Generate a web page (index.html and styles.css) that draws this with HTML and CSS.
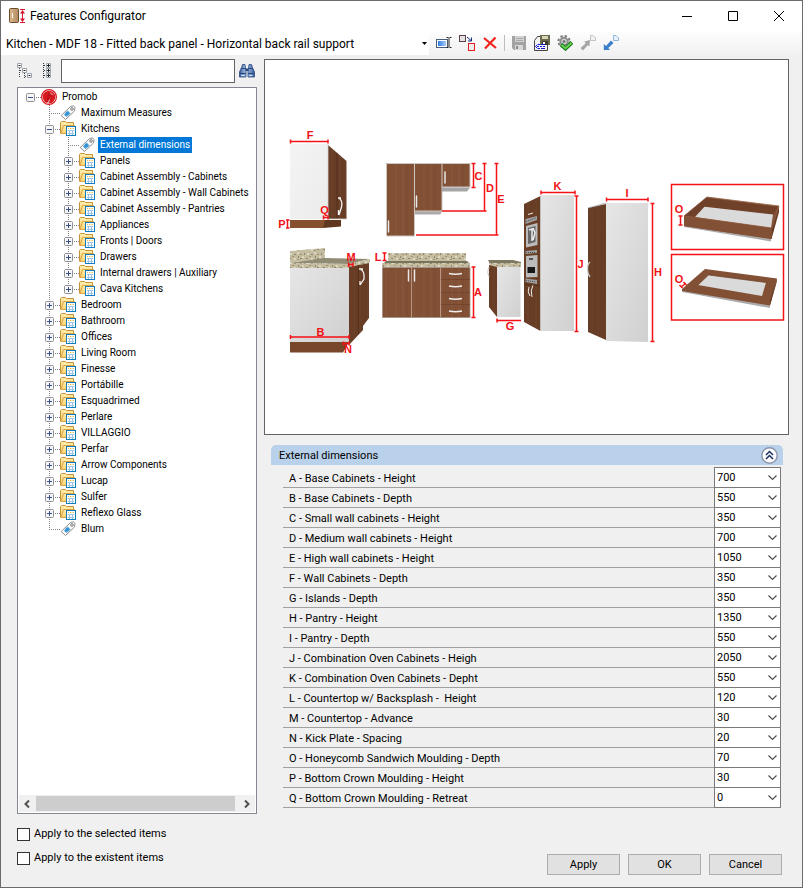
FILE: index.html
```html
<!DOCTYPE html>
<html lang="en">
<head>
<meta charset="utf-8">
<title>Features Configurator</title>
<link rel="stylesheet" href="styles.css">
</head>
<body>
<svg class="defs" aria-hidden="true">
  <defs>
    <linearGradient id="gold" x1="0" y1="0" x2="0" y2="1"><stop offset="0" stop-color="#ffeeb0"/><stop offset="1" stop-color="#fbd36c"/></linearGradient>
    <linearGradient id="door" x1="0" y1="0" x2="1" y2="0"><stop offset="0" stop-color="#dcb98c"/><stop offset="1" stop-color="#b08a62"/></linearGradient>
    <linearGradient id="bino" x1="0" y1="0" x2="1" y2="0"><stop offset="0" stop-color="#35599a"/><stop offset=".45" stop-color="#b3cbee"/><stop offset="1" stop-color="#35599a"/></linearGradient>
    <linearGradient id="sky" x1="0" y1="0" x2="1" y2="0"><stop offset="0" stop-color="#2f7fe6"/><stop offset="1" stop-color="#a9cdf8"/></linearGradient>
    <symbol id="folder" viewBox="0 0 16 16">
      <path d="M.5 12.500V1.500L1.500 .5H5.500L6.500 1.500H13.500V5" fill="url(#gold)" stroke="#c8923c"/>
      <path d="M1 12.500L3.500 4.500H14.500V12.500Z" fill="url(#gold)" stroke="#d9a141"/>
      <rect x="6.500" y="5.500" width="9" height="9" fill="#fff" stroke="#0f7cc0"/>
      <path d="M8 7.500H9M10 7.500H11.500M12.500 7.500H14" stroke="#f3c04d"/>
      <path d="M8 9.500H14M8 12.500H14M9.500 9V14M12.500 9V14" stroke="#9cc2e6"/>
    </symbol>
    <symbol id="tag" viewBox="0 0 16 16">
      <path d="M10.500 1.500L13.500 .8L15 2.500L14.500 6L5.500 14.500L1.200 10.500Z" fill="#fafafa" stroke="#8f8f8f"/>
      <path d="M7.500 5.500L10.500 8.500L6.500 12L4 9.500Z" fill="#4aa3dc"/>
      <path d="M6 7L9 10M8.800 7L5 10.500" stroke="#1b7fc6" stroke-width=".8"/>
      <circle cx="12" cy="4" r="1.300" fill="#fff" stroke="#777"/>
    </symbol>
    <symbol id="promob" viewBox="0 0 16 16">
      <circle cx="8" cy="8" r="7.400" fill="#fff" stroke="#d71920" stroke-width="1.200"/>
      <circle cx="8" cy="8" r="6.300" fill="#d71920"/>
      <path d="M7.500 4L11 3.500L12.500 6L10.500 7.500L8.500 7L7.500 9L9 10L8.500 12.500L6.500 13L6 9Z" fill="#b5121a"/>
      <path d="M8.500 3L12 4.500L12.500 6.500L10 6L9 4.500Z" fill="#ee6a6e"/>
      <path d="M8.500 10.500L7.500 13.500L5.500 14.200" fill="none" stroke="#fff" stroke-width=".8"/>
    </symbol>
    <symbol id="plus" viewBox="0 0 9 9">
      <rect x=".5" y=".5" width="8" height="8" rx="1" fill="#f6f6f6" stroke="#919191"/>
      <path d="M2 4.500H7M4.500 2V7" stroke="#33518f"/>
    </symbol>
    <symbol id="minus" viewBox="0 0 9 9">
      <rect x=".5" y=".5" width="8" height="8" rx="1" fill="#f6f6f6" stroke="#919191"/>
      <path d="M2 4.500H7" stroke="#33518f"/>
    </symbol>
    <symbol id="chevron" viewBox="0 0 9 6"><path d="M.5 .5L4.500 4.500L8.500 .5" fill="none" stroke="#505050" stroke-width="1.200"/></symbol>
  </defs>
</svg>

<div class="window">
  <header class="titlebar">
    <svg class="app-icon" viewBox="0 0 17 16" aria-hidden="true">
      <rect x=".5" y=".5" width="9" height="14" rx="1" fill="url(#door)" stroke="#6b4d2e"/>
      <path d="M3.500 5V10" stroke="#fff"/>
      <path d="M11 1.500H16M11 14.500H16M13.500 3V13" stroke="#d2122e"/>
      <path d="M13.500 2L16 5.500H11ZM13.500 14L16 10.500H11Z" fill="#d2122e"/>
    </svg>
    <h1>Features Configurator</h1>
    <button class="caption" aria-label="Minimize"><svg viewBox="0 0 10 10"><path d="M0 5.500H10"/></svg></button>
    <button class="caption" aria-label="Maximize"><svg viewBox="0 0 10 10"><path d="M.5 .5H9.500V9.500H.5Z"/></svg></button>
    <button class="caption" aria-label="Close"><svg viewBox="0 0 10 10"><path d="M0 0L10 10M10 0L0 10"/></svg></button>
  </header>

  <div class="toolbar">
    <div class="profile">
      <select aria-label="Profile"><option>Kitchen - MDF 18 - Fitted back panel - Horizontal back rail support</option></select>
      <svg viewBox="0 0 5 3" aria-hidden="true"><path d="M0 0H5L2.500 3Z"/></svg>
    </div>
    <button aria-label="Rename"><svg viewBox="0 0 16 16">
      <rect x=".5" y="4.500" width="11" height="8" fill="#fff" stroke="#4b5d7c"/><rect x="2" y="6" width="8" height="5" fill="url(#sky)"/>
      <path d="M10.500 2.500H12.500M13.500 2.500H15.500M13 3V12M10.500 12.500H12.500M13.500 12.500H15.500" stroke="#222" fill="none"/>
    </svg></button>
    <button aria-label="Replace"><svg viewBox="0 0 16 16">
      <rect x=".5" y=".5" width="6" height="6" fill="#e3e3e6" stroke="#5c4048"/><rect x="9.500" y="8.500" width="6" height="7" fill="#ececf0" stroke="#e01b1b"/>
      <path d="M8 2L12 5.500M12.500 2.500V6H9" stroke="#102a78" fill="none"/>
    </svg></button>
    <button aria-label="Delete"><svg viewBox="0 0 16 16"><path d="M2 3L14 13M13.500 2.500L3 13.500" stroke="#f0241c" stroke-width="2.200" fill="none"/></svg></button>
    <span class="separator"></span>
    <button aria-label="Save"><svg viewBox="0 0 16 16">
      <path d="M1 1H15V15H3L1 13Z" fill="#a2a2a2"/><rect x="4" y="1" width="9" height="6" fill="#d2d2d2"/><path d="M5 3.500H12M5 5.500H12" stroke="#a8a8a8"/><rect x="4" y="10" width="8" height="5" fill="#d8d8d8"/><rect x="5" y="11" width="2" height="3" fill="#8a8a8a"/>
    </svg></button>
    <button aria-label="Save as"><svg viewBox="0 0 16 16">
      <path d="M.5 5.500L3.500 1.500H13.500V15.500H.5Z" fill="#f2f2f2" stroke="#444"/>
      <path d="M6 0H16V10H6Z" fill="#6c6b52"/><rect x="8" y="1" width="6" height="3" fill="#d6d4b4"/><rect x="8" y="6" width="6" height="4" fill="#3c3b2c"/><rect x="9" y="7" width="2" height="2" fill="#fff"/>
      <path d="M3.500 9.500L1.500 11.500L3.500 13.500M4 9.500H6M7 9.500H11M3 11.500H5M6 11.500H8M9 11.500H11M4 13.500H6M7 13.500H11" stroke="#1217d8" fill="none"/>
    </svg></button>
    <button aria-label="Validate"><svg viewBox="0 0 16 16">
      <circle cx="7" cy="6.500" r="5.600" fill="none" stroke="#808080" stroke-width="2" stroke-dasharray="2.400 2"/>
      <circle cx="7" cy="6.500" r="3.700" fill="#d5d5d5" stroke="#8d8d8d" stroke-width="2"/><circle cx="7" cy="6.500" r="1.500" fill="#777"/>
      <path d="M4 9.500L8.500 13.500L15 7.500" fill="none" stroke="#1d7d22" stroke-width="4"/><path d="M4.500 10L8.500 13.300L14.500 8" fill="none" stroke="#65cf4e" stroke-width="2"/>
    </svg></button>
    <button aria-label="Export"><svg viewBox="0 0 16 16">
      <path d="M.5 13L5.500 8.500L4.500 6.500L10 5L9.500 11L7.500 10.500L3 15.500Z" fill="#a6a6a6"/><path d="M10.500 .5H13L15.500 3V5.500H10.500Z" fill="#f2f2f2" stroke="#c2c2c2"/>
    </svg></button>
    <button aria-label="Import"><svg viewBox="0 0 16 16">
      <path d="M.8 9V15H7L5.300 13L10.500 8L8 5.500L3 11Z" fill="#3b7fcb"/><path d="M10.500 .5H13L15.500 3V5.500H10.500Z" fill="#e9f2fc" stroke="#91b4da"/>
    </svg></button>
  </div>

  <main class="content">
    <section class="browser">
      <div class="search">
        <button aria-label="Collapse all"><svg viewBox="0 0 16 16">
          <path d="M2.500 5V15M7.500 10V15M3 7.500H5M8 13.500H10" stroke="#444" stroke-dasharray="1 1" fill="none"/>
          <path d="M.5 .5H4.500V4.500H.5ZM5.500 5.500H9.500V9.500H5.500ZM10.500 10.500H14.500V14.500H10.500Z" fill="#fff" stroke="#9ba3ad"/><path d="M1.500 2.500H3.500M6.500 7.500H8.500M11.500 12.500H13.500" stroke="#222"/>
        </svg></button>
        <button aria-label="Expand all"><svg viewBox="0 0 16 16">
          <path d="M4.500 0V16M5 2.500H7M5 7.500H7M5 12.500H7" stroke="#333" stroke-dasharray="1 1" fill="none"/>
          <path d="M7.500 .5H11.500V4.500H7.500ZM7.500 5.500H11.500V9.500H7.500ZM7.500 10.500H11.500V14.500H7.500Z" fill="#fff" stroke="#9ba3ad"/><path d="M8 2.500H11M9.500 1V4M8 7.500H11M9.500 6V9M8 12.500H11M9.500 11V14" stroke="#222"/>
        </svg></button>
        <input type="text" aria-label="Search">
        <button aria-label="Find"><svg viewBox="0 0 16 16">
          <path d="M3.500 1.500H6L6.500 5L7 8V14H.5V9L2.500 4.500ZM10 1.500H12.500L13.500 4.500L15.500 9V14H9V8L9.500 5Z" fill="url(#bino)" stroke="#27487f" stroke-width=".8"/><path d="M6.500 5.500H9.500V8H6.500Z" fill="#27487f"/><path d="M2 5.500H6.500M9.500 5.500H14M1 10.500H7M9 10.500H15" stroke="#27487f"/><path d="M2 12.500H5M10.500 12.500H13.500" stroke="#d5e3f8"/>
        </svg></button>
      </div>
      <div class="tree">
        <ul class="root">
          <li><div class="node"><span class="twist"><svg><use href="#minus"/></svg></span><svg class="pic"><use href="#promob"/></svg><span class="name">Promob</span></div>
            <ul>
              <li><div class="node"><span class="twist leaf"></span><svg class="pic"><use href="#tag"/></svg><span class="name">Maximum Measures</span></div></li>
              <li><div class="node"><span class="twist"><svg><use href="#minus"/></svg></span><svg class="pic"><use href="#folder"/></svg><span class="name">Kitchens</span></div>
                <ul>
                  <li><div class="node"><span class="twist leaf"></span><svg class="pic"><use href="#tag"/></svg><span class="name selected">External dimensions</span></div></li>
                  <li><div class="node"><span class="twist"><svg><use href="#plus"/></svg></span><svg class="pic"><use href="#folder"/></svg><span class="name">Panels</span></div></li>
                  <li><div class="node"><span class="twist"><svg><use href="#plus"/></svg></span><svg class="pic"><use href="#folder"/></svg><span class="name">Cabinet Assembly - Cabinets</span></div></li>
                  <li><div class="node"><span class="twist"><svg><use href="#plus"/></svg></span><svg class="pic"><use href="#folder"/></svg><span class="name">Cabinet Assembly - Wall Cabinets</span></div></li>
                  <li><div class="node"><span class="twist"><svg><use href="#plus"/></svg></span><svg class="pic"><use href="#folder"/></svg><span class="name">Cabinet Assembly - Pantries</span></div></li>
                  <li><div class="node"><span class="twist"><svg><use href="#plus"/></svg></span><svg class="pic"><use href="#folder"/></svg><span class="name">Appliances</span></div></li>
                  <li><div class="node"><span class="twist"><svg><use href="#plus"/></svg></span><svg class="pic"><use href="#folder"/></svg><span class="name">Fronts | Doors</span></div></li>
                  <li><div class="node"><span class="twist"><svg><use href="#plus"/></svg></span><svg class="pic"><use href="#folder"/></svg><span class="name">Drawers</span></div></li>
                  <li><div class="node"><span class="twist"><svg><use href="#plus"/></svg></span><svg class="pic"><use href="#folder"/></svg><span class="name">Internal drawers | Auxiliary</span></div></li>
                  <li><div class="node"><span class="twist"><svg><use href="#plus"/></svg></span><svg class="pic"><use href="#folder"/></svg><span class="name">Cava Kitchens</span></div></li>
                </ul>
              </li>
              <li><div class="node"><span class="twist"><svg><use href="#plus"/></svg></span><svg class="pic"><use href="#folder"/></svg><span class="name">Bedroom</span></div></li>
              <li><div class="node"><span class="twist"><svg><use href="#plus"/></svg></span><svg class="pic"><use href="#folder"/></svg><span class="name">Bathroom</span></div></li>
              <li><div class="node"><span class="twist"><svg><use href="#plus"/></svg></span><svg class="pic"><use href="#folder"/></svg><span class="name">Offices</span></div></li>
              <li><div class="node"><span class="twist"><svg><use href="#plus"/></svg></span><svg class="pic"><use href="#folder"/></svg><span class="name">Living Room</span></div></li>
              <li><div class="node"><span class="twist"><svg><use href="#plus"/></svg></span><svg class="pic"><use href="#folder"/></svg><span class="name">Finesse</span></div></li>
              <li><div class="node"><span class="twist"><svg><use href="#plus"/></svg></span><svg class="pic"><use href="#folder"/></svg><span class="name">Portábille</span></div></li>
              <li><div class="node"><span class="twist"><svg><use href="#plus"/></svg></span><svg class="pic"><use href="#folder"/></svg><span class="name">Esquadrimed</span></div></li>
              <li><div class="node"><span class="twist"><svg><use href="#plus"/></svg></span><svg class="pic"><use href="#folder"/></svg><span class="name">Perlare</span></div></li>
              <li><div class="node"><span class="twist"><svg><use href="#plus"/></svg></span><svg class="pic"><use href="#folder"/></svg><span class="name">VILLAGGIO</span></div></li>
              <li><div class="node"><span class="twist"><svg><use href="#plus"/></svg></span><svg class="pic"><use href="#folder"/></svg><span class="name">Perfar</span></div></li>
              <li><div class="node"><span class="twist"><svg><use href="#plus"/></svg></span><svg class="pic"><use href="#folder"/></svg><span class="name">Arrow Components</span></div></li>
              <li><div class="node"><span class="twist"><svg><use href="#plus"/></svg></span><svg class="pic"><use href="#folder"/></svg><span class="name">Lucap</span></div></li>
              <li><div class="node"><span class="twist"><svg><use href="#plus"/></svg></span><svg class="pic"><use href="#folder"/></svg><span class="name">Sulfer</span></div></li>
              <li><div class="node"><span class="twist"><svg><use href="#plus"/></svg></span><svg class="pic"><use href="#folder"/></svg><span class="name">Reflexo Glass</span></div></li>
              <li><div class="node"><span class="twist leaf"></span><svg class="pic"><use href="#tag"/></svg><span class="name">Blum</span></div></li>
            </ul>
          </li>
        </ul>
        <div class="scrollbar" aria-hidden="true">
          <svg viewBox="0 0 8 8"><path d="M5.500 .5L2 4L5.500 7.500"/></svg>
          <span class="thumb"></span>
          <svg viewBox="0 0 8 8"><path d="M2.500 .5L6 4L2.500 7.500"/></svg>
        </div>
      </div>
    </section>

    <section class="detail">
      <div class="preview">
        <svg viewBox="265 60 523 374" role="img" aria-label="Cabinet dimension diagram">
          <defs>
            <linearGradient id="panel" x1="0" y1="0" x2="1" y2="1"><stop offset="0" stop-color="#e6e6e6"/><stop offset="1" stop-color="#d0d0d0"/></linearGradient>
            <linearGradient id="light" x1="0" y1="0" x2="1" y2="1"><stop offset="0" stop-color="#f4f4f4"/><stop offset="1" stop-color="#ebebeb"/></linearGradient>
            <pattern id="wood" width="28" height="60" patternUnits="userSpaceOnUse"><rect width="28" height="60" fill="#825035"/><path d="M4 0V60M11 0V60M22 0V60" stroke="#865439" stroke-width="2"/><path d="M15 0V60" stroke="#7b4a30"/></pattern>
            <pattern id="dark" width="14" height="40" patternUnits="userSpaceOnUse"><rect width="14" height="40" fill="#673d25"/><path d="M4 0V40M10 0V40" stroke="#6b4028" stroke-width="1.500"/></pattern>
            <pattern id="granite" width="17" height="9" patternUnits="userSpaceOnUse">
              <rect width="17" height="9" fill="#c3bca1"/>
              <path d="M1 1H3V3H1ZM8 0H10V2H8ZM13 4H15V6H13ZM5 6H7V8H5Z" fill="#dcd7c1"/>
              <path d="M5 2H7V3H5ZM11 6H13V7H11ZM0 6H2V7H0ZM15 1H16V3H15ZM9 4H10V6H9Z" fill="#8f886f"/>
              <path d="M3 4H5V5H3ZM11 2H13V3H11ZM8 7H10V8H8Z" fill="#a98f6b"/>
            </pattern>
            <path id="pull" d="M0 0V11" stroke="#e8e8e8" stroke-width="1.500" stroke-linecap="round"/>
          </defs>

          <g class="wall-side">
            <path d="M290 144H328V219H290Z" fill="url(#light)"/>
            <path d="M328 145L346.500 161V219L328 219Z" fill="url(#dark)"/>
            <path d="M337 153V219" stroke="#4d2a17" stroke-width=".7"/>
            <path d="M328 144V219H346" fill="none" stroke="#d8d0ca" stroke-width=".8"/>
            <path d="M290 220H328L323 228H290Z" fill="#87502f"/>
            <path d="M325 220H341V226.500L323 228Z" fill="#60381f"/>
            <path d="M338.500 198Q343 200 341.500 207L339 215M338.500 215V210M338 198H341" fill="none" stroke="#f5f5f5" stroke-width="1.300"/>
          </g>
          <g class="base-side">
            <path d="M290 251L325 248V259L290 263Z" fill="url(#granite)"/>
            <path d="M290 263L325 258L370 259L349 264Z" fill="#8f8b74"/>
            <path d="M290 263L349 264L370 259V262.500L349 268H290Z" fill="url(#granite)"/>
            <path d="M290 268H349V342H290Z" fill="url(#panel)"/>
            <path d="M349 267L369 263V318L363 326V330L349 345Z" fill="url(#dark)"/>
            <path d="M358.500 265V334" stroke="#4d2a17" stroke-width=".7"/>
            <path d="M290 342H349L343 352.500H290Z" fill="#78462a"/>
            <path d="M360 269Q365 271 364 279L360 285M360 285V281M359 269H363" fill="none" stroke="#f5f5f5" stroke-width="1.300"/>
          </g>
          <g class="wall-front">
            <path d="M386 163H415V236H386ZM415 163H442V211.500H415ZM442 163H470V187H442Z" fill="url(#wood)"/>
            <path d="M386.500 236V163.500H470V187H442V163M414.500 163V236H387M415 211H442V187" fill="none" stroke="#cbc6c2"/>
            <path d="M442 187.500H470L467 191.500H442Z" fill="#a5a5a5"/><path d="M415 212H442L440 214.500H415Z" fill="#aaa"/>
            <use href="#pull" x="388.500" y="221"/><use href="#pull" x="416.500" y="196"/><use href="#pull" x="445" y="172"/>
          </g>
          <g class="base-front">
            <path d="M388 253H466V263H388Z" fill="url(#granite)"/><path d="M386 261H467L470 264H383Z" fill="#77745e"/><path d="M382 263H470V267H382Z" fill="url(#granite)"/>
            <path d="M382.500 267.500H470V317.500H382.500Z" fill="url(#wood)" stroke="#a08f84" stroke-width=".8"/>
            <path d="M411.500 268V317M440.500 268V317" stroke="#c5aa99" stroke-width=".8"/><path d="M441 279.500H470M441 292.500H470M441 304.500H470" stroke="#6d412b" stroke-width=".7"/>
            <use href="#pull" x="408.500" y="270"/><use href="#pull" x="414.500" y="270"/>
            <path d="M449 273.500Q455.500 275 462 273.500M449 286Q455.500 287.500 462 286M449 298.500Q455.500 300 462 298.500M449 311Q455.500 312.500 462 311" fill="none" stroke="#eee" stroke-width="1.500"/>
          </g>
          <g class="island">
            <path d="M488 260H513L521 262V264L490 264Z" fill="#7d7962"/><path d="M489 263H521V267H491Z" fill="url(#granite)"/>
            <path d="M489 265L497 267V317L489 307Z" fill="url(#dark)"/><path d="M497 267H520.500V317H497Z" fill="url(#panel)"/><path d="M489 267Q486.500 272 489 277" fill="none" stroke="#ccc"/>
          </g>
          <g class="oven-tower">
            <path d="M524 204L540.500 196V331L524 322Z" fill="url(#dark)"/><path d="M540.500 195H574V331H540.500Z" fill="url(#panel)"/><path d="M540.500 196V331" stroke="#bbb" stroke-width=".6"/>
            <path d="M525.500 219L537 216V220L525.500 224ZM525.500 251L537 250V253L525.500 254ZM525.500 278.500L537 280V284L525.500 282Z" fill="#a0a0a0"/>
            <path d="M526 221.500L536 218M526 252.500H536M526 280.500L536 282" stroke="#444" stroke-dasharray="1 1"/>
            <path d="M526 226L537.500 223V245L526 247.500Z" fill="#bcbcbc"/><path d="M528 228L535.500 226V242L528 244Z" fill="#666"/><path d="M529 230L532 229V241M533 228L535 233L533 240" stroke="#eee" stroke-width="1.500" fill="none"/>
            <path d="M526 256L537.500 255V277L526 277.500Z" fill="#bcbcbc"/><path d="M527.500 267H535V273H527.500Z" fill="#171717"/><path d="M529 259H533" stroke="#333" stroke-width="1.500"/>
            <path d="M528 214.500L533 213M529 287Q527 292 530 296M533 285Q530 291 532 297" fill="none" stroke="#eee"/><path d="M524 284L540 286" stroke="#46270f" stroke-width=".6"/>
          </g>
          <g class="pantry">
            <path d="M588 208L606 204V340L588 332Z" fill="url(#dark)"/><path d="M606 203H648V342L606 341Z" fill="url(#panel)"/><path d="M588 208L606 203" stroke="#999" stroke-width=".7"/>
            <path d="M590 262Q587.500 264 587.500 269T590 277" fill="none" stroke="#ccc" stroke-width="1.300"/>
          </g>
          <g class="drawers">
            <path d="M684 225L771 239V241.500L684 227Z" fill="#aaa"/>
            <path d="M684 216L707 197L779 206L771 239L684 226Z" fill="#825035"/>
            <path d="M707 198L778 207L773 215L698 206Z" fill="#6f4129"/>
            <path d="M695 217L698 206L773 214.500L771 228Z" fill="#dadada"/>
            <path d="M684 216L707 197V204L695 217Z" fill="#70412a"/>
            <path d="M684 216L772 228V239L684 226Z" fill="#825035"/>
            <path d="M772 228L779 206V212L771.500 239Z" fill="#65391f"/>
            <path d="M684 216L707 197L779 206L772 228Z" fill="none" stroke="#915d41" stroke-width=".8"/>
            <path d="M682 290L770 304V308L682 292Z" fill="#aaa"/>
            <path d="M682 289L705 269L777 278.500L770 305.500L682 291Z" fill="#825035"/><path d="M770 301L777 278.500V281L770 305.500Z" fill="#63371f"/>
            <path d="M698 285L708.500 275L766 282.500L762 296Z" fill="#dadada"/><path d="M698 285L708.500 275L766 282.500" fill="none" stroke="#6b402a" stroke-width=".7"/>
          </g>
          <g class="dimensions">
            <path d="M290 141.500H328M290.500 139.500V143.500M328 139.500V143.500M323.500 217.500H328M323.500 215.500V219.500M328 215.500V219.500M287.500 220V228M286 220H289.500M286 228H289.500"/>
            <path d="M473.500 163.500V187M471.500 163.500H475.500M471.500 187.500H475.500M484.500 163.500V211M482.500 163.500H486.500M442 211H486.500M496.500 163.500V235M494.500 163.500H498.500M416 235H498.500"/>
            <path d="M384.500 253V260.500M382.500 253H386.500M382.500 260.500H386.500M473.500 267V317M471.500 267H475.500M471.500 317.500H475.500"/>
            <path d="M348.500 264.500H353M348.500 262.500V267M353 262.500V267M290 337H349M290.500 335V339M349 335V339M343.500 343.500H349M343.500 341.500V345.500M349 341.500V345.500"/>
            <path d="M497 320.500H521M497 318.500V322.500M541 192.500H575M541 190.500V194.500M575 190.500V194.500M576.500 196V331M574.500 196H578.500M574.500 331.500H578.500"/>
            <path d="M606 199.500H648M606.500 197.500V201.500M648 197.500V201.500M652.500 203V341M650.500 203.500H654.500M650.500 341.500H654.500"/>
            <path d="M680.500 216V225M678.500 216H682.500M678.500 225H682.500M681 287L685 284M679.500 285L682.500 288M683.500 282L686.500 285"/>
            <path d="M671.500 184.500H783.500V249.500H671.500ZM671.500 254.500H783.500V320H671.500Z"/>
          </g>
          <g class="letters">
            <text x="310" y="139">F</text><text x="324.500" y="214">Q</text><text x="282" y="228">P</text><text x="478.500" y="180">C</text><text x="490" y="192">D</text><text x="501" y="203">E</text>
            <text x="378" y="261">L</text><text x="478" y="296">A</text><text x="351" y="261">M</text><text x="320.500" y="336">B</text><text x="348" y="353">N</text><text x="510" y="330">G</text>
            <text x="557.500" y="190">K</text><text x="580.500" y="268">J</text><text x="627" y="197">I</text><text x="658" y="276">H</text><text x="679" y="213">O</text><text x="679" y="283">O</text>
          </g>
        </svg>
      </div>

      <form class="group">
        <div class="group-head"><h2>External dimensions</h2>
          <button type="button" aria-label="Collapse"><svg viewBox="0 0 19 19"><circle cx="9.500" cy="9.500" r="7.700" fill="#fbfbfd" stroke="#8c96aa" stroke-width="1.400"/><path d="M6 9L9.500 5.500L13 9M6 13L9.500 9.500L13 13" fill="none" stroke="#1f2f63" stroke-width="1.500"/></svg></button>
        </div>
        <div class="field"><label for="fa">A - Base Cabinets - Height</label><div class="combo"><select id="fa"><option>700</option></select><svg><use href="#chevron"/></svg></div></div>
        <div class="field"><label for="fb">B - Base Cabinets - Depth</label><div class="combo"><select id="fb"><option>550</option></select><svg><use href="#chevron"/></svg></div></div>
        <div class="field"><label for="fc">C - Small wall cabinets - Height</label><div class="combo"><select id="fc"><option>350</option></select><svg><use href="#chevron"/></svg></div></div>
        <div class="field"><label for="fd">D - Medium wall cabinets - Height</label><div class="combo"><select id="fd"><option>700</option></select><svg><use href="#chevron"/></svg></div></div>
        <div class="field"><label for="fe">E - High wall cabinets - Height</label><div class="combo"><select id="fe"><option>1050</option></select><svg><use href="#chevron"/></svg></div></div>
        <div class="field"><label for="ff">F - Wall Cabinets - Depth</label><div class="combo"><select id="ff"><option>350</option></select><svg><use href="#chevron"/></svg></div></div>
        <div class="field"><label for="fg">G - Islands - Depth</label><div class="combo"><select id="fg"><option>350</option></select><svg><use href="#chevron"/></svg></div></div>
        <div class="field"><label for="fh">H - Pantry - Height</label><div class="combo"><select id="fh"><option>1350</option></select><svg><use href="#chevron"/></svg></div></div>
        <div class="field"><label for="fi">I - Pantry - Depth</label><div class="combo"><select id="fi"><option>550</option></select><svg><use href="#chevron"/></svg></div></div>
        <div class="field"><label for="fj">J - Combination Oven Cabinets - Heigh</label><div class="combo"><select id="fj"><option>2050</option></select><svg><use href="#chevron"/></svg></div></div>
        <div class="field"><label for="fk">K - Combination Oven Cabinets - Depht</label><div class="combo"><select id="fk"><option>550</option></select><svg><use href="#chevron"/></svg></div></div>
        <div class="field"><label for="fl">L - Countertop w/ Backsplash -&nbsp; Height</label><div class="combo"><select id="fl"><option>120</option></select><svg><use href="#chevron"/></svg></div></div>
        <div class="field"><label for="fm">M - Countertop - Advance</label><div class="combo"><select id="fm"><option>30</option></select><svg><use href="#chevron"/></svg></div></div>
        <div class="field"><label for="fn">N - Kick Plate - Spacing</label><div class="combo"><select id="fn"><option>20</option></select><svg><use href="#chevron"/></svg></div></div>
        <div class="field"><label for="fo">O - Honeycomb Sandwich Moulding - Depth</label><div class="combo"><select id="fo"><option>70</option></select><svg><use href="#chevron"/></svg></div></div>
        <div class="field"><label for="fp">P - Bottom Crown Moulding - Height</label><div class="combo"><select id="fp"><option>30</option></select><svg><use href="#chevron"/></svg></div></div>
        <div class="field"><label for="fq">Q - Bottom Crown Moulding - Retreat</label><div class="combo"><select id="fq"><option>0</option></select><svg><use href="#chevron"/></svg></div></div>
      </form>
    </section>
  </main>

  <footer class="footer">
    <div class="scope">
      <label><input type="checkbox">Apply to the selected items</label>
      <label><input type="checkbox">Apply to the existent items</label>
    </div>
    <div class="actions">
      <button>Apply</button>
      <button>OK</button>
      <button>Cancel</button>
    </div>
  </footer>
</div>
</body>
</html>
```

FILE: styles.css
```css
* { box-sizing: border-box; }

body {
  margin: 0;
  background: #f0f0f0;
  color: #000;
  font: 11px/16px Roboto, "Liberation Sans", sans-serif;
}

button, input, select { font: inherit; color: inherit; }
button { padding: 0; border: 0; background: none; }
svg { display: block; }
.defs { position: absolute; width: 0; height: 0; }

.window {
  display: flex;
  flex-direction: column;
  min-height: 100vh;
  border: 1px solid #6b6b6b;
}

/* Title bar */
.titlebar {
  display: flex;
  align-items: center;
  height: 30px;
  padding-left: 8px;
  background: #fff;
}
.app-icon { width: 17px; height: 16px; }
.titlebar h1 {
  flex: 1;
  margin: 0 0 0 4px;
  font-size: 12px;
  font-weight: normal;
}
.caption { width: 46px; height: 30px; }
.caption svg { width: 10px; height: 10px; margin: 0 auto; overflow: visible; fill: none; stroke: #000; }

/* Toolbar */
.toolbar {
  display: flex;
  align-items: center;
  gap: 7px;
  height: 24px;
  background: linear-gradient(#fdfdfd, #f1f1f1);
}
.toolbar button, .toolbar button svg { width: 16px; height: 16px; }
.separator { width: 1px; height: 16px; margin: 0 -1px; background: #bdbdbd; }
.profile {
  position: relative;
  width: 428px;
  height: 24px;
  background: #fff;
}
.profile select {
  width: 100%;
  height: 24px;
  padding: 1px 16px 0 5px;
  border: 0;
  appearance: none;
  background: none;
  font-size: 12px;
}
.profile svg { position: absolute; right: 2px; top: 11px; width: 5px; height: 3px; pointer-events: none; }

/* Main area */
.content {
  display: grid;
  flex: 1;
  grid-template-columns: 240px minmax(0, 1fr);
  gap: 7px;
  padding: 4px 13px 0 16px;
}
.browser { display: flex; flex-direction: column; gap: 4px; }
.search { display: flex; align-items: center; gap: 4px; height: 24px; padding-right: 2px; }
.search button { flex: none; width: 16px; }
.search button svg { width: 16px; height: 16px; }
.search button + button { margin-left: 2px; }
.search input { flex: 1; min-width: 0; height: 24px; margin: 0 0 0 2px; padding: 0 4px; border: 1px solid #646464; background: #fff; }

/* Tree */
.tree {
  display: flex;
  flex: 1;
  flex-direction: column;
  justify-content: space-between;
  padding: 1px;
  border: 1px solid #828790;
  background: #fff;
  font-size: 10px;
}
.tree ul { margin: 0; padding: 0 0 0 19px; list-style: none; }
.tree .root { padding: 0 0 0 2px; overflow: hidden; }
.tree li li { background: repeating-linear-gradient(#808080 0 1px, transparent 1px 2px) 9px 0 / 1px 100% no-repeat; }
.tree li li:last-child { background-size: 1px 9px; }
.node { display: flex; align-items: center; height: 16px; white-space: nowrap; }
.twist {
  flex: none;
  width: 20px;
  padding: 4px 0 3px 5px;
  background: repeating-linear-gradient(90deg, #808080 0 1px, transparent 1px 2px) 9px 8px / 11px 1px no-repeat;
}
.twist svg { width: 9px; height: 9px; }
.twist.leaf { height: 16px; }
.pic { flex: none; width: 16px; height: 16px; }
.name { margin-left: 3px; padding: 0 2px; }
.selected { background: #0078d7; color: #fff; }

.scrollbar { display: flex; align-items: center; height: 17px; background: #f0f0f0; }
.scrollbar svg { width: 17px; height: 8px; fill: none; stroke: #505050; stroke-width: 2; }
.thumb { flex: 1; height: 15px; margin-right: 3px; background: #cdcdcd; }

/* Preview */
.preview { border: 1px solid #646464; background: #fff; }
.preview svg { width: 100%; height: auto; }
.dimensions { fill: none; stroke: #f51216; stroke-width: 1.5px; }
.letters { fill: #f01216; font: bold 11px "Liberation Sans", Arial, sans-serif; text-anchor: middle; }

/* Property group */
.group { margin: 10px 6px 0 7px; }
.group-head {
  display: flex;
  align-items: center;
  height: 20px;
  margin-bottom: 2px;
  padding: 0 4px 0 8px;
  border-radius: 5px 5px 0 0;
  background: #b9d1ea;
}
.group-head h2 { flex: 1; margin: 0; padding-top: 2px; font-size: 11px; font-weight: normal; }
.group-head button svg { width: 19px; height: 19px; }
.field { display: flex; height: 20px; margin: 0 2px 0 12px; }
.field label {
  flex: 1;
  height: 21px;
  padding: 4px 0 0 6px;
  border-bottom: 1px solid #a0a0a0;
}
.combo { position: relative; width: 67px; height: 21px; }
.combo select {
  width: 100%;
  height: 21px;
  padding: 1px 16px 0 2px;
  border: 1px solid #7a7a7a;
  border-radius: 0;
  appearance: none;
  background: #fff;
}
.combo svg { position: absolute; right: 4px; top: 8px; width: 9px; height: 6px; pointer-events: none; }

/* Footer */
.footer {
  display: flex;
  align-items: flex-end;
  justify-content: space-between;
  padding: 11px 20px 12px 16px;
}
.scope { display: flex; flex-direction: column; gap: 6px; margin-bottom: 8px; }
.scope label { display: flex; align-items: center; height: 18px; }
.scope input { width: 13px; height: 13px; margin: 0 4px 0 0; border: 1px solid #333; appearance: none; background: #fff; }
.actions { display: flex; gap: 8px; }
.actions button { width: 73px; height: 21px; border: 1px solid #adadad; background: #e1e1e1; }
```
